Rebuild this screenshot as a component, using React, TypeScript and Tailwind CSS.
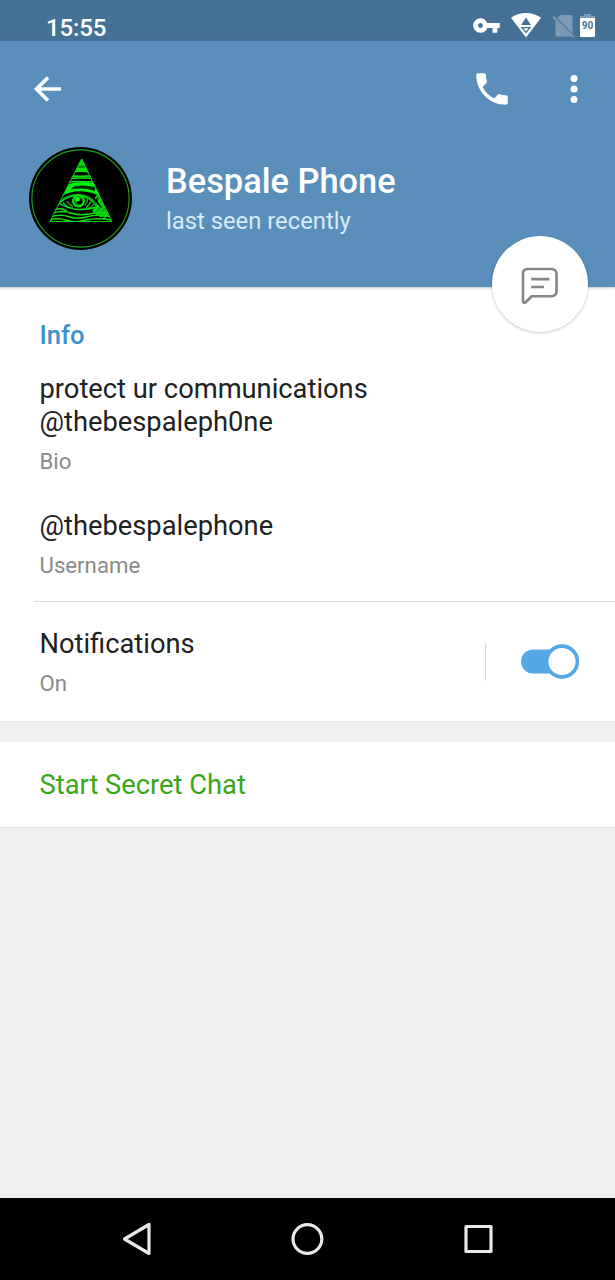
import { useState } from "react";
import type { ReactNode } from "react";

function StatusBar() {
  return (
    <div className="flex h-[41px] items-start bg-[#467196] pl-[46px] pr-[20px] text-white">
      <span className="mt-[14px] flex-1 text-[24px] font-medium leading-[28px] tracking-[-0.1px]">
        15:55
      </span>

      {/* VPN key */}
      <svg className="mt-[11px] h-[29px] w-[29px]" viewBox="0 0 24 24" fill="currentColor">
        <path d="M12.65 10C11.83 7.67 9.61 6 7 6c-3.31 0-6 2.69-6 6s2.69 6 6 6c2.61 0 4.83-1.67 5.65-4H17v4h4v-4h2v-4H12.65zM7 14c-1.1 0-2-.9-2-2s.9-2 2-2 2 .9 2 2-.9 2-2 2z" />
      </svg>

      {/* Wifi with activity arrows */}
      <svg className="ml-[9px] mt-[12px] h-[26px] w-[32px]" viewBox="0 0 32 26">
        <path d="M1 5.8C5.2 2.7 10.3 1 16 1s10.8 1.7 15 4.8L16 25.5z" fill="currentColor" />
        <path d="M16 5.5l5 7.500H11z" fill="#467196" />
        <path d="M12 15.600h8L16 20.500z" fill="none" stroke="#467196" strokeWidth="1.300" />
      </svg>

      {/* No SIM */}
      <svg className="ml-[10px] mt-[14px] h-[25px] w-[23px]" viewBox="0 0 23 25">
        <path
          d="M8.500 1h10a2 2 0 0 1 2 2v16.500L5.500 4z M3.500 6.500L19.500 22.500H5.500a2 2 0 0 1-2-2z"
          fill="#7d9bb5"
        />
        <path d="M1 2.500l20.500 20.500" stroke="#7d9bb5" strokeWidth="1.800" />
      </svg>

      {/* Battery */}
      <div className="ml-[5px] mt-[14px] flex w-[15px] flex-col items-center">
        <div className="h-[2px] w-[7px] bg-[#7d9bb5]" />
        <div className="h-[2px] w-full bg-[#7d9bb5]" />
        <div className="flex h-[19px] w-full items-center justify-center rounded-b-[1px] bg-white pb-[3px] text-[10px] font-bold leading-none text-[#467196]">
          90
        </div>
      </div>
    </div>
  );
}

function Avatar() {
  return (
    <svg className="h-[103px] w-[103px] shrink-0" viewBox="0 0 103 103" fill="none">
      <defs>
        <clipPath id="pyramid">
          <path d="M52.800 11L83.500 75H20.300z" />
        </clipPath>
      </defs>
      <circle cx="51.500" cy="51.500" r="51.500" fill="#000" />
      <circle cx="51.500" cy="51.500" r="48.600" stroke="#1fa01f" strokeWidth="1.100" />

      <g clipPath="url(#pyramid)">
        {/* Shading lines on the stone */}
        <path d="M48 12h9l4 11q-8 2-16 0z" fill="#0a8f0a" />
        <path d="M68 45l8 12 5 12-10 1-8-7 6-5z" fill="#0aae0f" />
        <g stroke="#10dc10" strokeWidth="2">
          <path d="M46 15q6-1 12 0M45 18q7-2 14 0M43 21.500q8 1 18 0M41 25q10-2 22 0M40 28.500q10 2 26 0" />
          <path d="M38 32q14-2 30 0M36 35q14-1 32 0" strokeWidth="1.600" />
          <path d="M24 66q10-3 18 0t18 1 22-1M22 69.700q10-3 18 0t18 0 24 0M20 73.200q10-3 18 0t18 0 28 0" strokeWidth="1.600" />
          <path d="M26 62.500q6-2 12 1.500M30 53q-3 4-4 8M64 65l8-8M67 68l9-9M71 70l8-8M74 72l8-8M68 58l5-8M71 60l5-7M66 52l4-6" strokeWidth="1.600" />
        </g>

        {/* Brow */}
        <path d="M30 48q5-11 16-12.500 12-1.500 23 1.500l6 14Q52 38 30 50z" fill="#00f012" />
        <path d="M42 42.500q1-3 5-3.500 9-1.500 19 1v4q-12-4-24-1.500z" fill="#032603" />
        <path d="M28 57Q38 45 53 45.500q13 1 20 16-9-10-22-11-12 0-23 9z" fill="#000" />
        <path d="M30 55q8-8 21-7.500 12 .5 19 12.500" stroke="#00c812" strokeWidth="1" />

        {/* Eye */}
        <path d="M30 56q9-7.500 19-7.500 12 0 19 11.500-8 2.500-17 2.500-12 0-21-6.500z" fill="#000" stroke="#00e612" strokeWidth="1.500" />
        <path d="M34 56q5 5 11 5.500M65 57q-3 4-8 4.500M62 53.500q-1 4-5 7M38 54q2 3.500 6 5.500M59 51q0 4-3 7" stroke="#12c812" strokeWidth="1.200" />
        <circle cx="49.500" cy="54" r="5.600" fill="#078007" stroke="#00e612" strokeWidth="1.800" />
        <circle cx="50.500" cy="54.500" r="2.600" fill="#000" />
        <circle cx="48.500" cy="52.500" r="2.200" fill="#12ff24" />
      </g>
      <path d="M52.600 12L82.600 74.500H21z" stroke="#00d612" strokeWidth="1" />
    </svg>
  );
}

function Header() {
  return (
    <header className="relative z-10 h-[246px] bg-[#5a8fbb] text-white shadow-[0_1px_3px_rgba(0,0,0,0.22)]">
      <div className="flex h-[96px] items-center pl-[33px] pr-[36px]">
        <button aria-label="Back">
          <svg className="h-[28px] w-[29px]" viewBox="0 0 29 28" fill="none">
            <path d="M28 14H4M15 2.500L3.500 14 15 25.500" stroke="currentColor" strokeWidth="3.600" />
          </svg>
        </button>
        <button aria-label="Call" className="ml-auto">
          <svg className="h-[42px] w-[42px]" viewBox="0 0 24 24" fill="currentColor">
            <path d="M6.620 10.790c1.440 2.830 3.760 5.140 6.590 6.590l2.200-2.200c.27-.27.67-.36 1.020-.24 1.120.37 2.330.57 3.570.57.55 0 1 .45 1 1V20c0 .55-.45 1-1 1-9.390 0-17-7.610-17-17 0-.55.45-1 1-1h3.500c.55 0 1 .45 1 1 0 1.250.2 2.450.57 3.570.11.35.03.74-.25 1.020l-2.200 2.200z" />
          </svg>
        </button>
        <button aria-label="More" className="ml-[56px]">
          <svg className="h-[30px] w-[10px]" viewBox="0 0 10 30" fill="currentColor">
            <circle cx="5" cy="4.500" r="3.500" />
            <circle cx="5" cy="15" r="3.500" />
            <circle cx="5" cy="25.500" r="3.500" />
          </svg>
        </button>
      </div>

      <div className="flex pl-[29px] pt-[10px]">
        <Avatar />
        <div className="ml-[34px] pt-[14px]">
          <h1 className="text-[34.400px] font-medium leading-[40px]">Bespale Phone</h1>
          <p className="mt-[6px] text-[23.800px] leading-[28px] text-[#d7eafa]">last seen recently</p>
        </div>
      </div>

      <button
        aria-label="Message"
        className="absolute -bottom-[45px] right-[27px] flex h-[96px] w-[96px] items-center justify-center rounded-full bg-white text-[#81868a] shadow-[0_1px_3px_rgba(0,0,0,0.22)]"
      >
        <svg className="mr-px mt-[3px] h-[37px] w-[37px]" viewBox="0 0 38 38" fill="none" stroke="currentColor" strokeWidth="2.700" strokeLinejoin="round">
          <path d="M6.500 2h25a5 5 0 0 1 5 5v18a5 5 0 0 1-5 5H11l-6.500 6.500Q2 37.500 2 34.500V6.500A4.500 4.500 0 0 1 6.500 2z" />
          <path d="M10.500 12.500h18.500M10.500 20.500h13" />
        </svg>
      </button>
    </header>
  );
}

function Field({ label, children }: { label: string; children: ReactNode }) {
  return (
    <div>
      <p className="text-[27.300px] leading-[33px] text-[#212121]">{children}</p>
      <p className="mt-[9px] text-[22.200px] leading-[26px] text-[#8a8a8a]">{label}</p>
    </div>
  );
}

function NavigationBar() {
  return (
    <nav className="flex h-[82px] items-center bg-black pl-[122px] pr-[121px] text-[#e8e8e8]">
      <svg className="h-[34px] w-[30px]" viewBox="0 0 30 34" fill="none" stroke="currentColor" strokeWidth="3.200" strokeLinejoin="round">
        <path d="M27 2.500v29L2.500 17z" />
      </svg>
      <svg className="ml-[138px] h-[34px] w-[34px]" viewBox="0 0 34 34" fill="none" stroke="currentColor" strokeWidth="3.200">
        <circle cx="17.400" cy="17" r="14.400" />
      </svg>
      <svg className="ml-auto h-[30px] w-[30px]" viewBox="0 0 30 30" fill="none" stroke="currentColor" strokeWidth="3.200" strokeLinejoin="round">
        <rect x="2" y="2.500" width="25" height="25" />
      </svg>
    </nav>
  );
}

export default function App() {
  const [notifications, setNotifications] = useState(true);

  return (
    <div className="flex h-[1280px] w-[615px] flex-col overflow-hidden bg-[#efefef] font-['Roboto',sans-serif]">
      <StatusBar />
      <Header />

      <section className="h-[435px] border-b border-[#e8e8e8] bg-white pt-[33px]">
        <div className="px-[39.500px]">
          <h2 className="mb-[23px] text-[25.600px] font-medium leading-[30px] text-[#3e92cc]">Info</h2>
          <Field label="Bio">
            protect ur communications
            <br />
            @thebespaleph0ne
          </Field>
          <div className="mt-[36px]">
            <Field label="Username">@thebespalephone</Field>
          </div>
        </div>

        <div className="ml-[34px] mt-[23px] h-px bg-[#d9d9d9]" />

        <div className="flex pl-[39.500px] pr-[36px] pt-[26px]">
          <Field label={notifications ? "On" : "Off"}>Notifications</Field>
          <div className="ml-auto mt-[15px] h-[38px] w-px bg-[#dadada]" />
          <button
            role="switch"
            aria-checked={notifications}
            aria-label="Notifications"
            onClick={() => setNotifications(!notifications)}
            className="ml-[35px] mt-[16px] h-[35px] w-[58px]"
          >
            <svg className="h-[35px] w-[58px]" viewBox="0 0 58 35">
              <rect x="0" y="5.500" width="52" height="24" rx="12" fill={notifications ? "#54a8e6" : "#b0b5ba"} />
              <circle
                cx={notifications ? 41 : 17}
                cy="17.500"
                r="15.400"
                fill="#fff"
                stroke={notifications ? "#54a8e6" : "#b0b5ba"}
                strokeWidth="3.600"
              />
            </svg>
          </button>
        </div>
      </section>

      <section className="mt-[20px] h-[86px] border-b border-[#e6e6e6] bg-white px-[39.500px] pt-[27px]">
        <button className="block text-[27.300px] leading-[33px] text-[#37a818]">Start Secret Chat</button>
      </section>

      <div className="flex-1" />
      <NavigationBar />
    </div>
  );
}
